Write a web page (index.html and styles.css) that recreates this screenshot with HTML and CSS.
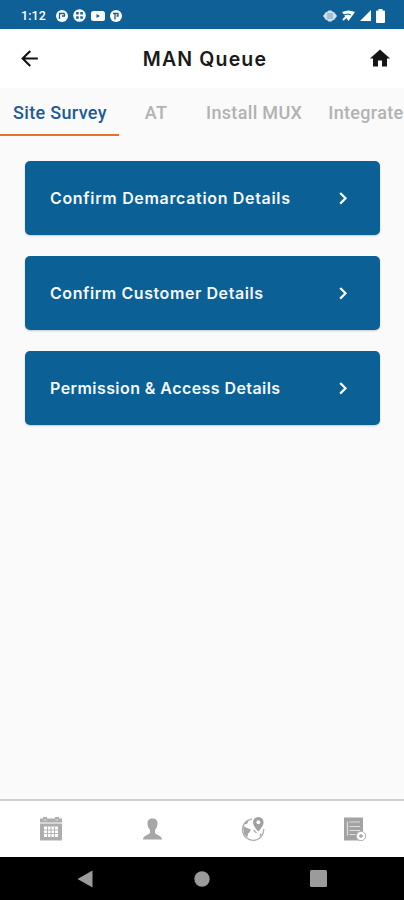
FILE: index.html
```
<!DOCTYPE html>
<html lang="en">
<head>
    <meta charset="UTF-8">
    <meta name="viewport" content="width=device-width, initial-scale=1.0">
    <title>MAN Queue</title>
    <link rel="stylesheet" href="styles.css">
</head>
<body>
    <!-- Status bar -->
    <div class="status-bar">
        <span class="time">1:12</span>
        <div class="notifications">
            <svg width="12" height="12" viewBox="0 0 12 12"><circle cx="6" cy="6" r="6" fill="#fff"/><path d="M3.500 9V3.500h5M6 6h2.500V3.500" fill="none" stroke="#0e6096" stroke-width="1.300"/></svg>
            <svg width="13" height="13" viewBox="0 0 13 13"><circle cx="6.500" cy="6.500" r="6.300" fill="#fff"/><g fill="#0e6096"><rect x="3.200" y="3" width="2.500" height="2.500"/><rect x="7.300" y="3" width="2.500" height="2.500"/><rect x="3.200" y="7.300" width="2.500" height="2.500"/><rect x="7.300" y="7.300" width="2.500" height="2.500"/></g></svg>
            <svg width="14" height="10" viewBox="0 0 14 10"><rect width="14" height="10" rx="2.500" fill="#fff"/><path d="M5.500 3l3.500 2-3.500 2z" fill="#0e6096"/></svg>
            <svg width="12" height="12" viewBox="0 0 12 12"><circle cx="6" cy="6" r="6" fill="#fff"/><path d="M5 9.500V3.500M3 3.500h5v2.500H6.500" fill="none" stroke="#0e6096" stroke-width="1.300"/></svg>
        </div>
        <div class="system">
            <svg width="14" height="12" viewBox="0 0 14 12"><path d="M0 6l3-4h1l1.500-1.500h3L10 2h1l3 4-3 4h-1l-1.500 1.500h-3L4 10H3z" fill="#cfe0ec"/><path d="M5 3v6M7 3v6M9 3v6" stroke="#6f9fc1" stroke-width="1"/></svg>
            <svg width="13" height="11" viewBox="0 0 13 11"><path d="M0 2q6.500-3 13 0L6.500 11z" fill="#fff"/><path d="M1 5l5-1 3 1" fill="none" stroke="#0e6096" stroke-width="1"/><path d="M1 10l4-4" stroke="#fff" stroke-width="2"/></svg>
            <svg width="11" height="11" viewBox="0 0 11 11"><path d="M11 0v11H0z" fill="#fff"/></svg>
            <svg width="9" height="14" viewBox="0 0 9 14"><path d="M2.500 0h4v1.500H8q1 0 1 1V13q0 1-1 1H1q-1 0-1-1V2.500q0-1 1-1h1.500z" fill="#fff"/></svg>
        </div>
    </div>

    <header>
        <a href="#" aria-label="Back"><svg width="25" height="25" viewBox="0 0 24 24"><path d="M20 11H7.830l5.590-5.590L12 4l-8 8 8 8 1.410-1.410L7.830 13H20z" fill="#111"/></svg></a>
        <h1>MAN Queue</h1>
        <a href="#" aria-label="Home"><svg width="24" height="25" viewBox="0 0 24 24"><path d="M10 20v-6h4v6h5v-8h3L12 3 2 12h3v8z" fill="#161616"/></svg></a>
    </header>

    <nav class="tabs">
        <a href="#" class="tab active">Site Survey</a>
        <a href="#" class="tab tab-at">AT</a>
        <a href="#" class="tab">Install MUX</a>
        <a href="#" class="tab">Integrate</a>
    </nav>

    <main>
        <a href="#" class="card">
            <span class="demarcation">Confirm Demarcation Details</span>
            <svg width="9" height="13" viewBox="0 0 9 13"><path d="M1.200 1l5.300 5.300-5.300 5.300" fill="none" stroke="#fff" stroke-width="2.200"/></svg>
        </a>
        <a href="#" class="card">
            <span class="customer">Confirm Customer Details</span>
            <svg width="9" height="13" viewBox="0 0 9 13"><path d="M1.200 1l5.300 5.300-5.300 5.300" fill="none" stroke="#fff" stroke-width="2.200"/></svg>
        </a>
        <a href="#" class="card">
            <span class="permission">Permission &amp; Access Details</span>
            <svg width="9" height="13" viewBox="0 0 9 13"><path d="M1.200 1l5.300 5.300-5.300 5.300" fill="none" stroke="#fff" stroke-width="2.200"/></svg>
        </a>
    </main>

    <nav class="bottom-nav">
        <!-- calendar -->
        <a href="#"><svg width="24" height="24" viewBox="0 0 24 24"><path d="M1 1.500h3V0h4v1.500h8V0h4v1.500h3v4H1zM1 6.500h22v17H1z" fill="#adadad"/><path d="M5 9.500h14V20H5z" fill="#fff"/><path d="M5 13h14M5 16.500h14M8.500 9.500V20M12 9.500V20M15.500 9.500V20" stroke="#b5b5b5" stroke-width="1"/><path d="M4.500 3h3M16.500 3h3" stroke="#e2e2e2" stroke-width="1"/></svg></a>
        <!-- profile -->
        <a href="#"><svg width="24" height="24" viewBox="0 0 24 24"><path d="M12.500 1.500c3.300 0 5.200 2 5 5 0 3-1 5-2.500 6.300v3c0 2 6.700 2.200 7 6.700H3c.3-4.500 7-4.700 7-6.700v-3C8.500 11.500 7.500 9.500 7.500 6.500c-.2-3 1.700-5 5-5z" fill="#a6a6a6"/></svg></a>
        <!-- map -->
        <a href="#"><svg width="24" height="24" viewBox="0 0 24 24"><path d="M11 2.200A10.600 10.600 0 1 0 22.700 12" fill="none" stroke="#adadad" stroke-width="1.300"/><path d="M2 9l3 1.500 5 2-1.500 3-1.500 1-.5 4L3 17zM2.500 7L6 3.500 8 3 6 7z" fill="#a6a6a6"/><path d="M12.500 13l3 3M20 16.500l-1 2.500" stroke="#adadad" stroke-width="1.300"/><path d="M17.300 14.500C14 10.500 12 8 12 5.200a5.300 5.200 0 0 1 10.600 0c0 2.800-1.800 5.300-5.300 9.300z" fill="#a0a0a0"/><circle cx="17.300" cy="5.200" r="1.900" fill="#fff"/></svg></a>
        <!-- forms -->
        <a href="#"><svg width="24" height="24" viewBox="0 0 24 24"><path d="M2 .5h19v23H2z" fill="#a3a3a3"/><path d="M5.500 4.500v14M7.500 5h10.500M7.500 9.500h10.500M7.500 13.500h10.500M7.500 17.500h6" stroke="#dedede" stroke-width="1.200"/><circle cx="19" cy="19" r="4.700" fill="#fff" stroke="#b0b0b0" stroke-width="1"/><path d="M16.900 19h4.200M19 16.900v4.200" stroke="#a3a3a3" stroke-width="1.300"/></svg></a>
    </nav>

    <div class="system-nav">
        <svg width="16" height="18" viewBox="0 0 16 18"><path d="M15.500.5v17L.5 9z" fill="#9b9b9b"/></svg>
        <svg width="16" height="16" viewBox="0 0 16 16"><circle cx="8" cy="8" r="7.700" fill="#9b9b9b"/></svg>
        <svg width="17" height="17" viewBox="0 0 17 17"><rect width="17" height="17" rx="1.500" fill="#9b9b9b"/></svg>
    </div>
</body>
</html>
```
FILE: styles.css
```
* {
    margin: 0;
    padding: 0;
    box-sizing: border-box;
}

body {
    height: 900px;
    display: flex;
    flex-direction: column;
    overflow: hidden;
    background: #fafafa;
    font-family: Roboto, sans-serif;
}

a {
    text-decoration: none;
    color: inherit;
}

svg {
    display: block;
    flex-shrink: 0;
}

.status-bar {
    height: 29px;
    background: #0e6096;
    color: #fff;
    display: flex;
    align-items: center;
    padding: 2px 19px 0 21px;
}

.time {
    width: 35px;
    font-size: 12.5px;
    font-weight: 500;
    letter-spacing: 0.1px;
}

.notifications {
    display: flex;
    align-items: center;
    gap: 5px;
}

.system {
    display: flex;
    align-items: center;
    gap: 5px;
    margin-left: auto;
}

header {
    height: 59px;
    background: #fff;
    display: flex;
    align-items: center;
    justify-content: space-between;
    padding: 0 12px 0 17px;
}

h1 {
    font-family: Inter, sans-serif;
    font-size: 19.5px;
    font-weight: 600;
    letter-spacing: 1.15px;
    color: #1a1a1a;
}

.tabs {
    height: 48px;
    display: flex;
    flex-shrink: 0;
    color: #b2b2b2;
    font-size: 18px;
    font-weight: 500;
    letter-spacing: 0.33px;
    white-space: nowrap;
}

.tab {
    flex-shrink: 0;
    padding: 0 13px;
    line-height: 49px;
}

.tab.active {
    width: 119px;
    padding-right: 0;
    color: #1c5c96;
    border-bottom: 2px solid #e8702f;
}

.tab-at {
    width: 74px;
    text-align: center;
}

main {
    flex: 1;
    display: flex;
    flex-direction: column;
    gap: 21px;
    padding: 25px 24px 0 25px;
}

.card {
    height: 74px;
    display: flex;
    align-items: center;
    justify-content: space-between;
    padding: 0 32px 0 25px;
    background: #0b6096;
    color: #f4f8fb;
    border-radius: 5px;
    box-shadow: 0 1px 2px rgba(0,0,0,0.2);
    font-family: Inter, sans-serif;
    font-size: 16px;
    font-weight: 600;
}

.demarcation {
    letter-spacing: 0.67px;
}

.customer {
    letter-spacing: 0.58px;
}

.permission {
    letter-spacing: 0.43px;
}

.bottom-nav {
    height: 58px;
    flex-shrink: 0;
    background: #fff;
    border-top: 2px solid #cfcfcf;
    display: grid;
    grid-template-columns: repeat(4, 1fr);
    align-items: center;
    justify-items: center;
}

.system-nav {
    height: 43px;
    background: #000;
    display: flex;
    align-items: center;
    justify-content: space-between;
    padding: 0 77px;
}
```
